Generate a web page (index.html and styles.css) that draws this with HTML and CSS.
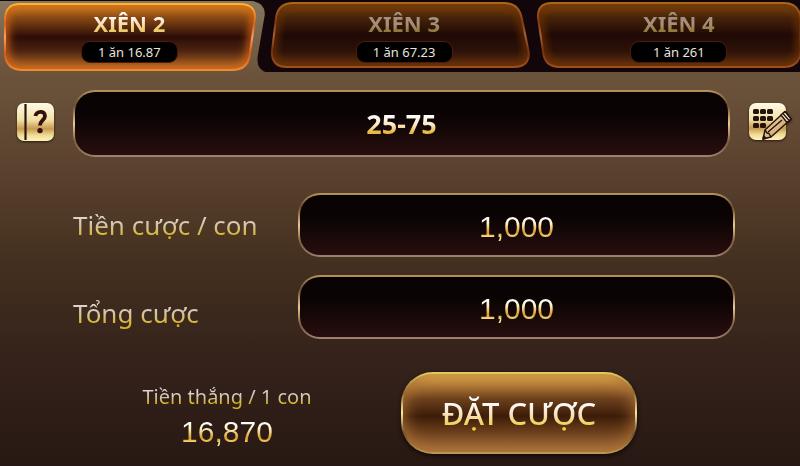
FILE: index.html
```html
<!DOCTYPE html>
<html lang="vi">
<head>
<meta charset="utf-8">
<meta name="viewport" content="width=device-width, initial-scale=1">
<title>Xiên 2</title>
<link rel="stylesheet" href="styles.css">
</head>
<body>
<svg class="defs" aria-hidden="true">
  <defs>
    <linearGradient id="tabOn" x1="0" y1="0" x2="0" y2="1">
      <stop offset="0" stop-color="#d08420"/><stop offset=".2" stop-color="#8a4a14"/>
      <stop offset=".5" stop-color="#2c0c08"/><stop offset=".7" stop-color="#4a2210"/>
      <stop offset="1" stop-color="#b86c28"/>
    </linearGradient>
    <linearGradient id="tabOff" x1="0" y1="0" x2="0" y2="1">
      <stop offset="0" stop-color="#80480f"/><stop offset=".22" stop-color="#482409"/>
      <stop offset=".5" stop-color="#1f0906"/><stop offset=".75" stop-color="#2c1208"/>
      <stop offset="1" stop-color="#603010"/>
    </linearGradient>
    <linearGradient id="rimOn" x1="0" y1="0" x2="0" y2="1">
      <stop offset="0" stop-color="#ffb52e"/><stop offset=".3" stop-color="#d8601c"/>
      <stop offset=".5" stop-color="#ffa05c"/><stop offset=".75" stop-color="#d8581a"/>
      <stop offset="1" stop-color="#ee8c30"/>
    </linearGradient>
    <linearGradient id="rimOff" x1="0" y1="0" x2="0" y2="1">
      <stop offset="0" stop-color="#a8681a"/><stop offset=".3" stop-color="#80380f"/>
      <stop offset=".5" stop-color="#a86034"/><stop offset=".75" stop-color="#74300e"/>
      <stop offset="1" stop-color="#a05018"/>
    </linearGradient>
    <linearGradient id="backing" x1="0" y1="0" x2="0" y2="1">
      <stop offset="0" stop-color="#857660"/><stop offset=".5" stop-color="#78624a"/><stop offset="1" stop-color="#6c543c"/>
    </linearGradient>
    <linearGradient id="gold" x1="0" y1="0" x2="0" y2="1">
      <stop offset="0" stop-color="#fffbe8"/><stop offset=".45" stop-color="#f2dfa4"/>
      <stop offset=".68" stop-color="#c69a50"/><stop offset=".85" stop-color="#f0dc98"/><stop offset="1" stop-color="#fff2b8"/>
    </linearGradient>
    <linearGradient id="pencil" x1="0" y1="0" x2="1" y2="1">
      <stop offset="0" stop-color="#fff0c8"/><stop offset="1" stop-color="#b88440"/>
    </linearGradient>
    <filter id="soft" x="-10%" y="-20%" width="120%" height="140%"><feGaussianBlur stdDeviation="4"/></filter>
  </defs>
</svg>

<nav class="tabs" role="tablist" aria-label="Loại cược">
  <button class="tab tab-active" type="button" role="tab" aria-selected="true">
    <svg class="tab-art" viewBox="0 0 275 72" preserveAspectRatio="none" aria-hidden="true">
      <clipPath id="c1"><path d="M28 4H248Q265 4 263 20L258 55Q256 70 240 70H31Q14 70 13 54V18Q14 4 28 4Z"/></clipPath>
      <path fill="url(#backing)" d="M0 1H259Q274 2 273 15L266 56Q264 70 276 73H0Z"/>
      <path fill="url(#tabOn)" d="M28 4H248Q265 4 263 20L258 55Q256 70 240 70H31Q14 70 13 54V18Q14 4 28 4Z"/>
      <g clip-path="url(#c1)"><path class="glow" stroke="#d86818" filter="url(#soft)" d="M28 4H248Q265 4 263 20L258 55Q256 70 240 70H31Q14 70 13 54V18Q14 4 28 4Z"/></g>
      <path class="rim" stroke="url(#rimOn)" d="M28 4H248Q265 4 263 20L258 55Q256 70 240 70H31Q14 70 13 54V18Q14 4 28 4Z"/>
    </svg>
    <span class="tab-name">XIÊN 2</span>
    <span class="tab-rate">1 ăn 16.87</span>
  </button>
  <button class="tab" type="button" role="tab" aria-selected="false">
    <svg class="tab-art" viewBox="0 0 275 72" preserveAspectRatio="none" aria-hidden="true">
      <clipPath id="c2"><path d="M26 3H237Q252 3 255 18L262 52Q263 67 247 67H20Q4 67 5 51L9 18Q11 3 26 3Z"/></clipPath>
      <path fill="url(#tabOff)" d="M26 3H237Q252 3 255 18L262 52Q263 67 247 67H20Q4 67 5 51L9 18Q11 3 26 3Z"/>
      <g clip-path="url(#c2)"><path class="glow" stroke="#703008" filter="url(#soft)" d="M26 3H237Q252 3 255 18L262 52Q263 67 247 67H20Q4 67 5 51L9 18Q11 3 26 3Z"/></g>
      <path class="rim" stroke="url(#rimOff)" d="M26 3H237Q252 3 255 18L262 52Q263 67 247 67H20Q4 67 5 51L9 18Q11 3 26 3Z"/>
    </svg>
    <span class="tab-name">XIÊN 3</span>
    <span class="tab-rate">1 ăn 67.23</span>
  </button>
  <button class="tab" type="button" role="tab" aria-selected="false">
    <svg class="tab-art" viewBox="0 0 275 72" preserveAspectRatio="none" aria-hidden="true">
      <clipPath id="c3"><path d="M11 3H243Q258 3 260 18V51Q259 67 243 67H19Q3 67 2 51L-3 18Q-4 3 11 3Z"/></clipPath>
      <path fill="url(#tabOff)" d="M11 3H243Q258 3 260 18V51Q259 67 243 67H19Q3 67 2 51L-3 18Q-4 3 11 3Z"/>
      <g clip-path="url(#c3)"><path class="glow" stroke="#703008" filter="url(#soft)" d="M11 3H243Q258 3 260 18V51Q259 67 243 67H19Q3 67 2 51L-3 18Q-4 3 11 3Z"/></g>
      <path class="rim" stroke="url(#rimOff)" d="M11 3H243Q258 3 260 18V51Q259 67 243 67H19Q3 67 2 51L-3 18Q-4 3 11 3Z"/>
    </svg>
    <span class="tab-name">XIÊN 4</span>
    <span class="tab-rate">1 ăn 261</span>
  </button>
</nav>

<form class="panel">
  <div class="picks">
    <button class="icon-button" type="button" aria-label="Hướng dẫn">
      <svg width="38" height="40" viewBox="0 0 38 40" aria-hidden="true">
        <rect x="0" y="1" width="37" height="38" rx="7" fill="url(#gold)"/>
        <path d="M8.500 2V38" stroke="#2a1410" stroke-width="2.200"/>
        <path d="M18.500 14C19 9 28 8 28 14C28 18 23 18.500 23 23.500" fill="none" stroke="#35100c" stroke-width="3.800"/>
        <circle cx="23" cy="28.600" r="2.700" fill="#35100c"/>
      </svg>
    </button>
    <div class="field field-picks">
      <input class="value value-picks" type="text" value="25-75" aria-label="Cặp số" readonly>
    </div>
    <button class="icon-button" type="button" aria-label="Chọn số">
      <svg width="43" height="40" viewBox="0 0 43 40" aria-hidden="true">
        <rect x="0" y="1" width="37" height="37" rx="7" fill="url(#gold)"/>
        <g fill="#24120c">
          <rect x="4" y="7" width="6" height="5" rx="1.500"/><rect x="11" y="7" width="6" height="5" rx="1.500"/><rect x="18" y="7" width="6" height="5" rx="1.500"/>
          <rect x="4" y="14" width="6" height="5" rx="1.500"/><rect x="11" y="14" width="6" height="5" rx="1.500"/><rect x="18" y="14" width="6" height="5" rx="1.500"/>
          <rect x="4" y="21" width="6" height="5" rx="1.500"/><rect x="11" y="21" width="6" height="5" rx="1.500"/>
        </g>
        <g stroke="#24120c" stroke-width="1.400" stroke-linejoin="round">
          <path fill="url(#pencil)" d="M14 37L16 28L36 9.500L42 17L22 35Z"/>
          <path fill="#fff0cc" d="M32 13L36 9.500L42 17L38 20.500Z"/>
          <path fill="none" d="M34 11.500L40 18.500M16 28L18 31L20 31.500L22 35M19 30L33 18"/>
          <path fill="#24120c" d="M14 37L14.700 34L17 36.200Z"/>
        </g>
      </svg>
    </button>
  </div>

  <div class="stakes">
    <label class="stake-label" for="stake">Tiền cược / con</label>
    <div class="field"><input class="value" id="stake" type="text" inputmode="numeric" value="1,000"></div>
    <label class="stake-label stake-label-total" for="total">Tổng cược</label>
    <div class="field"><input class="value" id="total" type="text" value="1,000" readonly></div>
  </div>

  <div class="summary">
    <div class="win">
      <span class="win-label">Tiền thắng / 1 con</span>
      <output class="win-value">16,870</output>
    </div>
    <button class="submit" type="submit"><span class="submit-text">ĐẶT CƯỢC</span></button>
  </div>
</form>
</body>
</html>
```

FILE: styles.css
```css
* {
  box-sizing: border-box;
}

body {
  margin: 0;
  min-height: 100vh;
  display: flex;
  flex-direction: column;
  overflow-x: hidden;
  background: #10060a;
  font-family: "Noto Sans", "Open Sans", sans-serif;
}

button {
  padding: 0;
  border: 0;
  background: none;
  font-family: inherit;
  cursor: pointer;
}

.defs {
  position: absolute;
  width: 0;
  height: 0;
}

/* Tabs */
.tabs {
  display: grid;
  grid-template-columns: repeat(3, 34%);
  margin-left: -8px;
  background: #12060a;
}

.tab {
  position: relative;
  height: 72px;
  display: flex;
  flex-direction: column;
  align-items: center;
  padding-top: 9px;
}

.tab-art {
  position: absolute;
  inset: 0;
  width: 100%;
  height: 100%;
  overflow: visible;
}

.glow {
  fill: none;
  stroke-width: 7;
}

.rim {
  fill: none;
  stroke-width: 2;
}

.tab-name {
  position: relative;
  font-size: 22px;
  line-height: 28px;
  font-weight: 700;
  color: transparent;
  background: linear-gradient(#a09080 25%, #a89078 55%, #8c7428 85%);
  background-clip: text;
}

.tab-active .tab-name {
  background-image: linear-gradient(#fff 25%, #f6dcb0 55%, #e8c850 85%);
}

.tab-rate {
  position: relative;
  width: 97px;
  margin-top: 4px;
  border: 1px solid #4a1c0a;
  border-radius: 9px;
  background: #000;
  color: #e8e4de;
  font-size: 13px;
  line-height: 20px;
  text-align: center;
}

/* Panel */
.panel {
  flex: 1;
  padding: 18px 8px 12px 17px;
  background: linear-gradient(#6c543c, #5c4430 22%, #44301f 48%, #36241c 70%, #281813);
  border-bottom: 2px solid #180c0a;
}

.picks {
  display: grid;
  grid-template-columns: 37px 1fr 43px;
  column-gap: 19px;
  align-items: center;
}

.icon-button {
  height: 44px;
  display: flex;
  align-items: flex-start;
  filter: drop-shadow(0 1px 1px #2a1a10);
}

.icon-button svg {
  flex: none;
}

.field {
  height: 64px;
  display: flex;
  border: 2px solid transparent;
  border-radius: 22px;
  background:
    linear-gradient(#080202, #0c0404 40%, #280e0e) padding-box,
    linear-gradient(#b8945c, #6c4c30 22%, #ecc890 50%, #7c5c42 78%, #a08270) border-box;
}

.field-picks {
  height: 67px;
}

.value {
  width: 100%;
  min-width: 0;
  padding: 4px 0 0;
  border: 0;
  outline: 0;
  text-align: center;
  font-family: "Liberation Sans", Arial, sans-serif;
  font-size: 30px;
  color: transparent;
  background: linear-gradient(#fff 38%, #fff0c0 48%, #d89a24 62%, #fff0a0 72%);
  background-clip: text;
}

.value-picks {
  padding: 0;
  font-family: "Noto Sans", "Open Sans", sans-serif;
  font-size: 27px;
  font-weight: 700;
  background-image: linear-gradient(#fff 36%, #fce8c4 52%, #e8b840 64%);
}

.stakes {
  display: grid;
  grid-template-columns: 225px 1fr;
  row-gap: 18px;
  align-items: center;
  margin: 36px 57px 0 56px;
}

.stake-label,
.win-label {
  justify-self: start;
  white-space: nowrap;
  font-size: 26px;
  line-height: 52px;
  color: transparent;
  background: linear-gradient(#e0d4cc 34%, #d4c4a8 50%, #d8b424 72%);
  background-clip: text;
}

.stake-label-total {
  align-self: end;
}

/* Summary */
.summary {
  display: grid;
  grid-template-columns: 308px 236px;
  column-gap: 0;
  margin: 33px 0 0 76px;
}

.win {
  display: flex;
  flex-direction: column;
  align-items: center;
  width: 268px;
  padding-top: 10px;
}

.win-label {
  font-size: 20px;
  line-height: 30px;
}

.win-value {
  font-family: "Liberation Sans", Arial, sans-serif;
  font-size: 30px;
  line-height: 40px;
  color: transparent;
  background: linear-gradient(#fff 25%, #fff0c0 42%, #d89a24 65%, #fff0a0 80%);
  background-clip: text;
}

.submit {
  height: 82px;
  border: 2px solid transparent;
  border-radius: 32px;
  background:
    linear-gradient(#e8b850, #b47c38 14%, #6c401c 32%, #3c1c08 54%, #6c401c 75%, #a8703c) padding-box,
    linear-gradient(#e8cc60, #8c6830 25%, #ffe8a0 50%, #705028 75%, #c09858) border-box;
  box-shadow: inset 0 0 18px #b07438, 0 2px 4px #120806;
}

.submit-text {
  font-size: 31px;
  line-height: 44px;
  font-weight: 500;
  color: transparent;
  background: linear-gradient(#fff 25%, #f8e4cc 50%, #f0d040 82%);
  background-clip: text;
}
```
